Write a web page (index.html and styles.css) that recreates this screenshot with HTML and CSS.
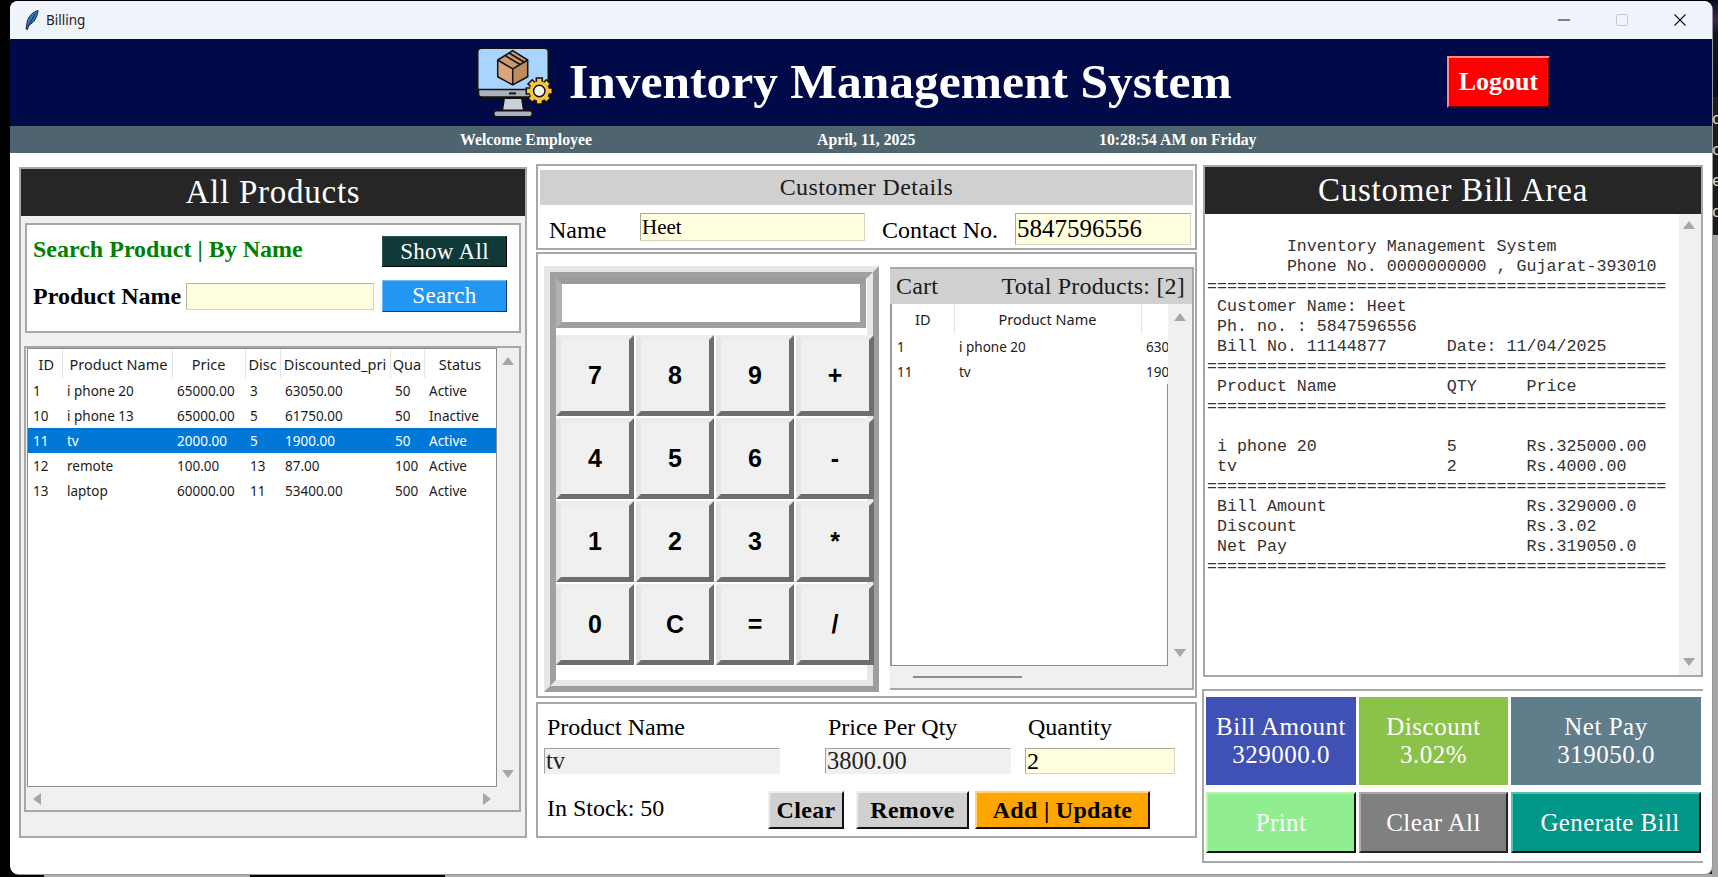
FILE: index.html
```html
<!DOCTYPE html>
<html lang="en">
<head>
  <meta charset="UTF-8" />
  <meta name="viewport" content="width=device-width, initial-scale=1" />
  <title>Billing</title>
  <link rel="stylesheet" href="styles.css">
</head>
<body>
<!-- bits of the window behind, seen at the right edge -->
<div class="desk-behind"><span>d</span><span>ol</span><span>ec</span><span>di</span></div>

<div class="window">

  <!-- title bar -->
  <div class="titlebar">
    <svg class="feather" viewBox="0 0 14 20" width="14" height="20">
      <path d="M13 .5C8 2 3 6 2 13L1 19l1.4.6L4 15C9 13 12.500 7 13 .5Z" fill="#2f74bd" stroke="#1b2a3a" stroke-width="1"/>
      <path d="M10 4 3 17" stroke="#0c2440" stroke-width=".8"/>
    </svg>
    <span class="titlebar-name">Billing</span>
    <div class="win-controls">
      <span class="win-btn"><svg width="12" height="12" viewBox="0 0 12 12"><path d="M0 6h12" stroke="#111" stroke-width="1.2"/></svg></span>
      <span class="win-btn"><svg width="12" height="12" viewBox="0 0 12 12"><rect x=".5" y=".5" width="11" height="11" rx="1.500" fill="none" stroke="#c8ccd2"/></svg></span>
      <span class="win-btn"><svg width="12" height="12" viewBox="0 0 12 12"><path d="M.5.5l11 11M11.500.5l-11 11" stroke="#111" stroke-width="1.1"/></svg></span>
    </div>
  </div>

  <!-- header -->
  <div class="header">
    <svg class="logo" viewBox="0 0 77 72" width="77" height="72">
      <path d="M28 52h18l2 13H26Z" fill="#c9d0d9" stroke="#111" stroke-width="2"/>
      <rect x="17.500" y="64.500" width="39" height="6.500" rx="3" fill="#aab2bd" stroke="#111" stroke-width="2"/>
      <rect x="1.500" y="2" width="71" height="50" rx="4" fill="#a8d4ff" stroke="#111" stroke-width="2"/>
      <path d="M2.500 43.500h69V48a3 3 0 0 1-3 3h-63a3 3 0 0 1-3-3Z" fill="#a9b1bb" stroke="#111" stroke-width="1.500"/>
      <rect x="33" y="46.300" width="7" height="2.200" fill="#222"/>
      <path d="M36.700 23 21.700 14v16.700l15 8.300Z" fill="#d9a679"/>
      <path d="M36.700 23 51.700 14v16.700l-15 8.300Z" fill="#bf8a5d"/>
      <path d="M36.700 4.700 51.700 14 36.700 23 21.700 14Z" fill="#c99a6e"/>
      <path d="M36.700 4.700 51.700 14v16.700L36.700 39 21.700 30.700V14ZM21.700 14l15 9 15-9M36.700 23v16M29 9.500l15 9M33 7l15 9" fill="none" stroke="#111" stroke-width="1.500"/>
      <g transform="translate(63.300 45)">
        <g fill="#f5c542" stroke="#111" stroke-width="1.500">
          <rect x="-3" y="-13" width="6" height="26"/>
          <rect x="-3" y="-13" width="6" height="26" transform="rotate(45)"/>
          <rect x="-3" y="-13" width="6" height="26" transform="rotate(90)"/>
          <rect x="-3" y="-13" width="6" height="26" transform="rotate(135)"/>
        </g>
        <circle r="9.800" fill="#f5c542"/>
        <circle r="5.700" fill="#f2f2f2" stroke="#111" stroke-width="1.500"/>
      </g>
    </svg>
    <div class="header-title">Inventory Management System</div>
    <button class="logout">Logout</button>
  </div>

  <div class="subbar">
    <span class="sub-welcome">Welcome Employee</span>
    <span class="sub-date">April, 11, 2025</span>
    <span>10:28:54 AM on Friday</span>
  </div>

  <div class="main">

    <!-- left: all products -->
    <div class="col-left">
      <div class="dark-band">All Products</div>
      <div class="search-box">
        <div class="search-title">Search Product | By Name</div>
        <button class="soft-btn show-all">Show All</button>
        <label class="search-label">Product Name</label>
        <input class="search-input" type="text" />
        <button class="soft-btn search-btn">Search</button>
      </div>
      <div class="products-frame">
        <div class="grid-box">
          <table class="grid products">
            <colgroup><col class="c-id"><col class="c-name"><col class="c-price"><col class="c-disc"><col class="c-dprice"><col class="c-qty"><col class="c-status"></colgroup>
            <thead><tr><th>ID</th><th>Product Name</th><th>Price</th><th>Disc</th><th>Discounted_pri</th><th>Qua</th><th>Status</th></tr></thead>
            <tbody>
              <tr><td>1</td><td>i phone 20</td><td>65000.00</td><td>3</td><td>63050.00</td><td>50</td><td>Active</td></tr>
              <tr><td>10</td><td>i phone 13</td><td>65000.00</td><td>5</td><td>61750.00</td><td>50</td><td>Inactive</td></tr>
              <tr class="selected"><td>11</td><td>tv</td><td>2000.00</td><td>5</td><td>1900.00</td><td>50</td><td>Active</td></tr>
              <tr><td>12</td><td>remote</td><td>100.00</td><td>13</td><td>87.00</td><td>100</td><td>Active</td></tr>
              <tr><td>13</td><td>laptop</td><td>60000.00</td><td>11</td><td>53400.00</td><td>500</td><td>Active</td></tr>
            </tbody>
          </table>
        </div>
        <div class="vscroll"><i class="arr-up"></i><i class="arr-down"></i></div>
        <div class="hscroll"><i class="arr-left"></i><i class="arr-right"></i></div>
      </div>
    </div>

    <!-- middle -->
    <div class="col-mid">
      <div class="cust-frame">
        <div class="gray-head">Customer Details</div>
        <div class="cust-row">
          <label class="cust-name-label">Name</label>
          <input class="yellow-input cust-name" type="text" value="Heet" />
          <label class="cust-contact-label">Contact No.</label>
          <input class="yellow-input cust-contact" type="text" value="5847596556" />
        </div>
      </div>

      <div class="work-frame">
        <div class="calc">
          <div class="calc-inner">
            <input class="calc-display" type="text" />
            <div class="calc-keys">
              <button>7</button><button>8</button><button>9</button><button>+</button>
              <button>4</button><button>5</button><button>6</button><button>-</button>
              <button>1</button><button>2</button><button>3</button><button>*</button>
              <button>0</button><button>C</button><button>=</button><button>/</button>
            </div>
          </div>
        </div>

        <div class="cart">
          <div class="cart-head"><span>Cart</span><span>Total Products: [2]</span></div>
          <div class="cart-body">
            <div class="cart-grid">
              <div class="cart-clip">
                <table class="grid cart-table">
                  <colgroup><col class="c-cid"><col class="c-cname"><col class="c-cprice"></colgroup>
                  <thead><tr><th>ID</th><th>Product Name</th><th></th></tr></thead>
                  <tbody>
                    <tr><td>1</td><td>i phone 20</td><td>63050.00</td></tr>
                    <tr><td>11</td><td>tv</td><td>1900.00</td></tr>
                  </tbody>
                </table>
              </div>
            </div>
            <div class="vscroll"><i class="arr-up"></i><i class="arr-down"></i></div>
            <div class="cart-hscroll"><span class="thumb"></span></div>
          </div>
        </div>
      </div>

      <div class="item-frame">
        <label class="item-label">Product Name</label>
        <label class="item-label">Price Per Qty</label>
        <label class="item-label">Quantity</label>
        <input class="item-input item-name" type="text" value="tv" readonly />
        <input class="item-input item-price" type="text" value="3800.00" readonly />
        <input class="yellow-input item-qty" type="text" value="2" />
        <div class="item-actions">
          <span class="in-stock">In Stock: 50</span>
          <button class="raised-btn btn-clear">Clear</button>
          <button class="raised-btn btn-remove">Remove</button>
          <button class="raised-btn btn-add">Add | Update</button>
        </div>
      </div>
    </div>

    <!-- right: bill -->
    <div class="col-right">
      <div class="bill-frame">
        <div class="dark-band">Customer Bill Area</div>
        <div class="bill-body">
<pre class="bill-text">

        Inventory Management System
        Phone No. 0000000000 , Gujarat-393010
==============================================
 Customer Name: Heet
 Ph. no. : 5847596556
 Bill No. 11144877      Date: 11/04/2025
==============================================
 Product Name           QTY     Price
==============================================

 i phone 20             5       Rs.325000.00
 tv                     2       Rs.4000.00
==============================================
 Bill Amount                    Rs.329000.0
 Discount                       Rs.3.02
 Net Pay                        Rs.319050.0
==============================================
</pre>
          <div class="vscroll"><i class="arr-up"></i><i class="arr-down"></i></div>
        </div>
      </div>

      <div class="totals-frame">
        <div class="total-cell cell-bill">Bill Amount<br>329000.0</div>
        <div class="total-cell cell-disc">Discount<br>3.02%</div>
        <div class="total-cell cell-net">Net Pay<br>319050.0</div>
        <button class="action-btn btn-print">Print</button>
        <button class="action-btn btn-clearall">Clear All</button>
        <button class="action-btn btn-generate">Generate Bill</button>
      </div>
    </div>
  </div>
</div>
</body>
</html>
```

FILE: styles.css
```css
* { box-sizing: border-box; }

html, body { height: 100%; }

body {
  margin: 0;
  width: 1718px;
  height: 877px;
  overflow: hidden;
  padding: 1px 6px 3px 10px;
  font-family: "Liberation Serif", serif;
  color: #000;
  background:
    linear-gradient(to bottom, #0c0c1e 0, #3a2a52 20px, #14142c 32px, #0c0c1e 97px, #1c1c1c 97px, #1c1c1c 235px, #a6a6a6 235px) right top / 6px 100% no-repeat,
    linear-gradient(to right, #000 44px, #b0b0b0 44px, #b0b0b0 250px, #000 250px, #000 445px, #adadad 445px) left bottom / 100% 3px no-repeat,
    #000;
}

.desk-behind {
  position: absolute;
  left: 1712px;
  top: 102px;
  width: 6px;
  overflow: hidden;
  font: 17px/31px "Noto Sans", sans-serif;
  color: #d8d8d8;
}
.desk-behind span { display: block; }

button { font-family: inherit; cursor: pointer; padding: 0; }
input { font-family: inherit; outline: none; padding: 0 1px; }

.window {
  width: 1702px;
  height: 873px;
  background: #fff;
  border-radius: 8px;
  overflow: hidden;
  display: flex;
  flex-direction: column;
  box-shadow: 1px 1px 0 #999;
}

/* title bar */
.titlebar {
  height: 38px;
  flex: none;
  background: #eff3fa;
  display: flex;
  align-items: center;
  padding-left: 15px;
}
.feather { margin-right: 7px; }
.titlebar-name { font: 13.5px "Noto Sans", sans-serif; color: #222; }
.win-controls { margin-left: auto; margin-right: 3px; display: flex; }
.win-btn { width: 58px; height: 38px; display: flex; align-items: center; justify-content: center; }

/* header */
.header {
  height: 87px;
  flex: none;
  background: #010a48;
  display: flex;
  align-items: flex-start;
  padding: 7px 162px 0 466px;
}
.logo { margin-right: 16px; flex: none; }
.header-title {
  color: #fff;
  font-weight: bold;
  font-size: 49.5px;
  line-height: 72px;
  white-space: nowrap;
}
.logout {
  margin-left: auto;
  margin-top: 10px;
  width: 103px;
  height: 52px;
  background: #ff0000;
  color: #fff;
  font-weight: bold;
  font-size: 26px;
  border: 2px solid;
  border-color: #ff8a8a #600 #600 #ff8a8a;
}

.subbar {
  height: 27px;
  flex: none;
  background: #4e6570;
  color: #fff;
  font-weight: bold;
  font-size: 15.8px;
  display: flex;
  align-items: center;
  padding-left: 450px;
  white-space: nowrap;
}
.sub-welcome { width: 357px; }
.sub-date { width: 282px; }

.main {
  flex: 1;
  display: flex;
  align-items: flex-start;
  padding-left: 9px;
}

.dark-band {
  height: 47px;
  flex: none;
  background: #262626;
  color: #fff;
  font-size: 33px;
  line-height: 47px;
  text-align: center;
  letter-spacing: 0.75px;
}

/* left column */
.col-left {
  width: 508px;
  height: 671px;
  margin-top: 14px;
  border: 2px solid #a8a8a8;
  background: #f0f0f0;
  display: flex;
  flex-direction: column;
  flex: none;
}
.search-box {
  height: 110px;
  flex: none;
  margin: 7px 4px 0;
  border: 2px solid #a8a8a8;
  background: #fff;
  padding: 11px 0 0 6px;
  display: grid;
  grid-template-columns: 153px 196px 125px;
  grid-template-rows: 31px 32px;
  row-gap: 13px;
  align-items: center;
}
.search-title {
  grid-column: 1 / 3;
  color: #008000;
  font-weight: bold;
  font-size: 24px;
  padding-bottom: 4px;
  white-space: nowrap;
}
.search-label { font-weight: bold; font-size: 24px; white-space: nowrap; }
.search-input {
  width: 188px;
  height: 27px;
  background: #ffffe0;
  border: 1px solid #d6d6c0;
  border-top-color: #b4b4a4;
  border-left-color: #b4b4a4;
}
.soft-btn {
  height: 100%;
  color: #fff;
  font-size: 23px;
  letter-spacing: 0.3px;
  border: 1px solid;
}
.show-all { background: #0f3a38; border-color: #2b5553 #000 #000 #2b5553; }
.search-btn { background: #2196f3; border-color: #6ebcf7 #0a3c66 #0a3c66 #6ebcf7; }

.products-frame {
  height: 466px;
  flex: none;
  margin: 13px 4px 0 3px;
  border: 2px solid #a8a8a8;
  display: grid;
  grid-template-columns: 470px 1fr;
  grid-template-rows: 1fr 23px;
  padding-left: 1px;
}
.grid-box {
  border: 1px solid #8c8c94;
  background: #fff;
  overflow: hidden;
}

/* data tables */
.grid {
  table-layout: fixed;
  border-collapse: collapse;
  font: 13.5px "Noto Sans", sans-serif;
  color: #1c1c1c;
  background: #fff;
}
.grid th {
  height: 29px;
  font-weight: normal;
  font-size: 14.5px;
  overflow: hidden;
  white-space: nowrap;
  border-right: 1px solid #e5e5e5;
  padding: 0;
  text-align: center;
}
.grid td {
  height: 25px;
  padding: 0 0 0 5px;
  overflow: hidden;
  white-space: nowrap;
}
.grid .selected td { background: #0078d7; color: #fff; }
.products { width: 468px; }
.products th:nth-child(-n+2) { padding-left: 3px; }
.c-id { width: 34px; }
.c-name { width: 110px; }
.c-price { width: 73px; }
.c-disc { width: 35px; }
.c-dprice { width: 110px; }
.c-qty { width: 34px; }
.c-status { width: 72px; }

/* scrollbars */
.vscroll {
  background: #f0f0f0;
  display: flex;
  flex-direction: column;
  justify-content: space-between;
  align-items: center;
  padding: 9px 0;
}
.hscroll {
  background: #f0f0f0;
  display: flex;
  justify-content: space-between;
  align-items: center;
  padding: 0 6px;
}
.arr-up, .arr-down, .arr-left, .arr-right { display: block; width: 0; height: 0; border-style: solid; border-color: transparent; }
.arr-up { border-width: 0 6px 8px; border-bottom-color: #a6a6a6; }
.arr-down { border-width: 8px 6px 0; border-top-color: #a6a6a6; }
.arr-left { border-width: 6px 8px 6px 0; border-right-color: #a6a6a6; }
.arr-right { border-width: 6px 0 6px 8px; border-left-color: #a6a6a6; }

/* middle column */
.col-mid {
  width: 661px;
  flex: none;
  margin: 11px 0 0 9px;
  display: flex;
  flex-direction: column;
}
.cust-frame {
  height: 86px;
  border: 2px solid #a8a8a8;
  padding: 4px 2px 0;
}
.gray-head {
  height: 35px;
  background: #d0d0d0;
  font-size: 24px;
  line-height: 35px;
  text-align: center;
  letter-spacing: 0.4px;
  color: #1a1a1a;
}
.cust-row {
  display: flex;
  align-items: flex-start;
  padding: 8px 0 0 9px;
  font-size: 24px;
  white-space: nowrap;
}
.cust-name-label { width: 91px; line-height: 34px; }
.cust-contact-label { width: 133px; line-height: 34px; margin-left: 17px; }
.yellow-input {
  background: #ffffe0;
  border: 1px solid #d6d6c0;
  border-top-color: #a8a896;
  border-left-color: #a8a896;
  color: #000;
}
.cust-name { width: 225px; height: 28px; font-size: 21px; }
.cust-contact { width: 176px; height: 32px; font-size: 25px; }

.work-frame {
  height: 446px;
  margin-top: 2px;
  border: 2px solid #a8a8a8;
  padding: 12px 1px 0 6px;
  display: flex;
  gap: 11px;
}
.calc {
  width: 335px;
  height: 426px;
  flex: none;
  border: 6px solid;
  border-color: #e6e6e6 #9e9e9e #9e9e9e #e6e6e6;
  background: #fff;
}
.calc-inner {
  height: 100%;
  background: #fff;
  border: 6px solid;
  border-color: #a0a0a0 #e8e8e8 #e8e8e8 #a0a0a0;
}
.calc-display {
  display: block;
  width: 310px;
  height: 50px;
  border: 6px solid;
  border-color: #9a9a9a #a0a0a0 #a0a0a0 #b0b0b0;
  background: #fff;
}
.calc-keys {
  margin-top: 7px;
  width: 318px;
  display: grid;
  grid-template-columns: repeat(4, 1fr);
  grid-auto-rows: 81.3px;
  gap: 1.7px 2px;
}
.calc-keys button {
  background: #f0f0f0;
  border: 5px solid;
  border-color: #ececec #6e6e6e #6e6e6e #e4e4e4;
  font: bold 25px "Liberation Sans", sans-serif;
  color: #000;
}

.cart {
  width: 304px;
  height: 423px;
  margin-top: 1px;
  flex: none;
  background: #f0f0f0;
  display: flex;
  flex-direction: column;
  border-right: 2px solid #a8a8a8;
  border-bottom: 2px solid #a8a8a8;
}
.cart-head {
  height: 37px;
  flex: none;
  background: #d0d0d0;
  border-top: 2px solid #a8a8a8;
  display: flex;
  justify-content: space-between;
  align-items: center;
  padding: 0 7px 0 6px;
  font-size: 24px;
  letter-spacing: 0.2px;
  color: #1a1a1a;
  white-space: nowrap;
}
.cart-body {
  flex: 1;
  min-height: 0;
  display: grid;
  grid-template-columns: 278px 1fr;
  grid-template-rows: 1fr 22px;
}
.cart-grid {
  background: #fff;
  border-left: 2px solid #9a9aa0;
  border-right: 1px solid #8c8c94;
  border-bottom: 1px solid #8c8c94;
  min-height: 0;
}
.cart-clip { height: 100%; margin-right: -1px; overflow: hidden; }
.cart-table { width: 349px; }
.c-cid { width: 62px; }
.c-cname { width: 187px; }
.c-cprice { width: 100px; }
.cart-table th { height: 30px; }
.cart-hscroll {
  grid-column: 1 / 3;
  background: #f0f0f0;
  display: flex;
  align-items: center;
  padding-left: 23px;
}
.thumb { width: 109px; height: 2px; background: #8c8c8c; }

.item-frame {
  height: 136px;
  margin-top: 4px;
  border: 2px solid #a8a8a8;
  padding: 8px 0 0 6px;
  display: grid;
  grid-template-columns: 281px 200px 1fr;
  grid-template-rows: 36px 26px 1fr;
  align-items: center;
}
.item-label { font-size: 24px; line-height: 30px; padding-left: 3px; white-space: nowrap; align-self: start; }
.item-input {
  height: 26px;
  background: #f0f0f0;
  border: 1px solid #f0f0f0;
  border-top-color: #a0a0a0;
  border-left-color: #a0a0a0;
  font-size: 24.5px;
  color: #222;
}
.item-name { width: 236px; }
.item-price { width: 186px; }
.item-qty { width: 150px; height: 26px; font-size: 24px; }
.item-actions {
  grid-column: 1 / 4;
  display: flex;
  align-items: flex-start;
  padding-top: 17px;
  align-self: start;
  height: 56px;
}
.in-stock { width: 224px; padding: 0 0 0 3px; font-size: 24px; line-height: 34px; white-space: nowrap; }
.raised-btn {
  height: 38px;
  font-weight: bold;
  font-size: 24px;
  letter-spacing: 0.3px;
  color: #000;
  border: 2px solid;
  border-color: #eee #111 #111 #eee;
  background: #d0d0d0;
}
.btn-clear { width: 76px; }
.btn-remove { width: 113px; margin-left: 12px; }
.btn-add { width: 175px; margin-left: 6px; background: #ffa500; border-color: #ffd27a #111 #111 #ffd27a; }

/* right column */
.col-right {
  width: 500px;
  flex: none;
  margin: 12px 0 0 6px;
}
.bill-frame {
  height: 512px;
  border: 2px solid #a8a8a8;
  display: flex;
  flex-direction: column;
}
.bill-body {
  flex: 1;
  min-height: 0;
  display: flex;
}
.bill-text {
  flex: 1;
  margin: 0;
  padding: 3px 0 0 2px;
  font: 16.65px/20px "Liberation Mono", monospace;
  color: #333;
  background: #fff;
  overflow: hidden;
}
.bill-body .vscroll { width: 22px; flex: none; padding: 7px 3px 9px 0; }

.totals-frame {
  height: 174px;
  margin-top: 12px;
  margin-left: -1px;
  border: 2px solid #a8a8a8;
  border-right: 0;
  padding: 6px 0 0 2px;
  display: grid;
  grid-template-columns: 150px 149px 190px;
  grid-template-rows: 88px 61px;
  gap: 7px 3px;
}
.total-cell {
  display: block;
  color: #fff;
  font-size: 25px;
  line-height: 28px;
  text-align: center;
  letter-spacing: 0.5px;
  white-space: nowrap;
  padding-top: 16px;
}
.cell-bill { background: #3f51b5; }
.cell-disc { background: #8bc34a; }
.cell-net { background: #607d8b; }
.action-btn {
  color: #fff;
  font-size: 25px;
  letter-spacing: 0.4px;
  border: 2px solid;
}
.btn-print { background: #90ee90; border-color: #b6f5b6 #111 #111 #b6f5b6; }
.btn-clearall { background: #808080; border-color: #a8a8a8 #222 #222 #a8a8a8; }
.btn-generate { background: #009688; border-color: #56c0b6 #111 #111 #56c0b6; padding-left: 8px; }
```
